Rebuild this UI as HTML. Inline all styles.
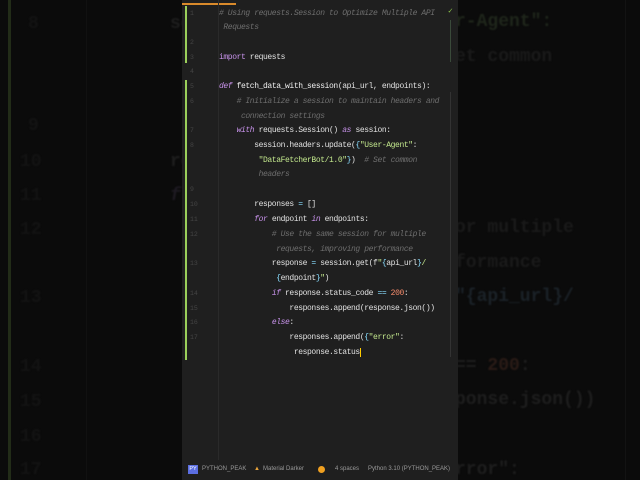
<!DOCTYPE html>
<html><head><meta charset="utf-8"><style>
body{margin:0;width:640px;height:480px;background:#0b0b0b;overflow:hidden;position:relative;font-family:"Liberation Mono",monospace}
.bg{position:absolute;font-size:18px;color:#1e1e1e;white-space:pre;filter:blur(0.8px);font-weight:bold}
#p{position:absolute;left:182px;top:0;width:276px;height:480px;background:#1f1f1f;overflow:hidden}
.l{position:absolute;left:37px;font-size:8px;letter-spacing:-0.4px;color:#e0e0e0;white-space:pre;line-height:10px}
.n{position:absolute;left:8px;font-size:6.5px;color:#444;line-height:10px}
.c{color:#6e6e6e;font-style:italic}
.k{color:#c792ea;font-style:italic}
.kw{color:#c792ea}
.s{color:#c3e88d}
.o{color:#89ddff}
.num{color:#f78c6c}
.f{color:#f0f0f0}
</style></head><body>
<div style="position:absolute;left:8px;top:0;width:3px;height:480px;background:#222c18"></div>
<div style="position:absolute;left:86px;top:0;width:1px;height:480px;background:#111"></div>
<div class="bg" style="left:28px;top:14px;color:#131313">8</div>
<div class="bg" style="left:28px;top:116px;color:#131313">9</div>
<div class="bg" style="left:20px;top:152px;color:#131313">10</div>
<div class="bg" style="left:20px;top:186px;color:#131313">11</div>
<div class="bg" style="left:20px;top:220px;color:#131313">12</div>
<div class="bg" style="left:20px;top:288px;color:#131313">13</div>
<div class="bg" style="left:20px;top:357px;color:#131313">14</div>
<div class="bg" style="left:20px;top:392px;color:#131313">15</div>
<div class="bg" style="left:20px;top:427px;color:#131313">16</div>
<div class="bg" style="left:20px;top:460px;color:#131313">17</div>
<div class="bg" style="left:170px;top:14px">se</div>
<div class="bg" style="left:170px;top:152px">re</div>
<div class="bg" style="left:170px;top:186px;font-style:italic;color:#1e1a22">f</div>
<div class="bg" style="left:455px;top:12px;color:#1f261b">r-Agent":</div>
<div class="bg" style="left:455px;top:47px;color:#1a1a1a">et common</div>
<div class="bg" style="left:455px;top:218px;color:#1a1a1a">or multiple</div>
<div class="bg" style="left:455px;top:253px;color:#1a1a1a">formance</div>
<div class="bg" style="left:455px;top:287px;color:#1b2228">"{api_url}/</div>
<div class="bg" style="left:455px;top:356px">== <span style="color:#2a1b16">200</span>:</div>
<div class="bg" style="left:455px;top:390px">ponse.json())</div>
<div class="bg" style="left:455px;top:460px">rror":</div>
<div style="position:absolute;left:625px;top:0;width:1px;height:480px;background:#131313"></div>

<div id="p">
<div style="position:absolute;left:0;top:3px;width:54px;height:2px;background:#d98a2b"></div>
<div style="position:absolute;left:3px;top:6px;width:2px;height:57px;background:#9bcf5a"></div>
<div style="position:absolute;left:3px;top:80px;width:2px;height:280px;background:#9bcf5a"></div>
<div style="position:absolute;left:36px;top:0;width:1px;height:460px;background:#2a2a2a"></div>
<div style="position:absolute;left:268px;top:20px;width:1px;height:42px;background:#3a4a3a"></div>
<div style="position:absolute;left:268px;top:92px;width:1px;height:265px;background:#333"></div>
<div style="position:absolute;left:266px;top:6px;font-size:8px;color:#8bc34a">✓</div>

<div class="n" style="top:9px">1</div><div class="l c" style="top:9px"># Using requests.Session to Optimize Multiple API</div>
<div class="l c" style="top:23px"> Requests</div>
<div class="n" style="top:38px">2</div>
<div class="n" style="top:53px">3</div><div class="l" style="top:53px"><span class="kw">import</span> requests</div>
<div class="n" style="top:67px">4</div>
<div class="n" style="top:82px">5</div><div class="l" style="top:82px"><span class="k">def</span> <span class="f">fetch_data_with_session</span>(api_url, endpoints):</div>
<div class="n" style="top:97px">6</div><div class="l c" style="top:97px">    # Initialize a session to maintain headers and</div>
<div class="l c" style="top:112px">     connection settings</div>
<div class="n" style="top:126px">7</div><div class="l" style="top:126px">    <span class="k">with</span> requests.Session() <span class="k">as</span> session:</div>
<div class="n" style="top:141px">8</div><div class="l" style="top:141px">        session.headers.update(<span class="o">{</span><span class="s">"User-Agent"</span>:</div>
<div class="l" style="top:156px">         <span class="s">"DataFetcherBot/1.0"</span><span class="o">}</span>)  <span class="c"># Set common</span></div>
<div class="l c" style="top:170px">         headers</div>
<div class="n" style="top:185px">9</div>
<div class="n" style="top:200px">10</div><div class="l" style="top:200px">        responses <span class="o">=</span> []</div>
<div class="n" style="top:215px">11</div><div class="l" style="top:215px">        <span class="k">for</span> endpoint <span class="k">in</span> endpoints:</div>
<div class="n" style="top:230px">12</div><div class="l c" style="top:230px">            # Use the same session for multiple</div>
<div class="l c" style="top:245px">             requests, improving performance</div>
<div class="n" style="top:259px">13</div><div class="l" style="top:259px">            response <span class="o">=</span> session.get(f<span class="s">"</span><span class="o">{</span>api_url<span class="o">}</span><span class="s">/</span></div>
<div class="l" style="top:274px">             <span class="o">{</span>endpoint<span class="o">}</span><span class="s">"</span>)</div>
<div class="n" style="top:289px">14</div><div class="l" style="top:289px">            <span class="k">if</span> response.status_code <span class="o">==</span> <span class="num">200</span>:</div>
<div class="n" style="top:304px">15</div><div class="l" style="top:304px">                responses.append(response.json())</div>
<div class="n" style="top:318px">16</div><div class="l" style="top:318px">            <span class="k">else</span>:</div>
<div class="n" style="top:333px">17</div><div class="l" style="top:333px">                responses.append(<span class="o">{</span><span class="s">"error"</span>:</div>
<div class="l" style="top:348px">                 response.status<span style="border-left:1px solid #ffcc00"></span></div>

<div style="position:absolute;left:0;top:465px;width:276px;height:15px;font-family:'Liberation Sans',sans-serif;font-size:6px;color:#9a9a9a;white-space:nowrap">
<span style="position:absolute;left:6px;top:0px;width:10px;height:9px;background:#5b6ee1;color:#fff;font-size:5.5px;text-align:center;line-height:9px">PY</span>
<span style="position:absolute;left:20px;top:1px">PYTHON_PEAK</span>
<span style="position:absolute;left:72px;top:1px;color:#e8a33a">▲</span>
<span style="position:absolute;left:81px;top:1px">Material Darker</span>
<span style="position:absolute;left:136px;top:1px;width:7px;height:7px;border-radius:50%;background:#f0a020"></span>
<span style="position:absolute;left:153px;top:1px">4 spaces</span>
<span style="position:absolute;left:186px;top:1px">Python 3.10 (PYTHON_PEAK)</span>
</div>
</div>
</body></html>
